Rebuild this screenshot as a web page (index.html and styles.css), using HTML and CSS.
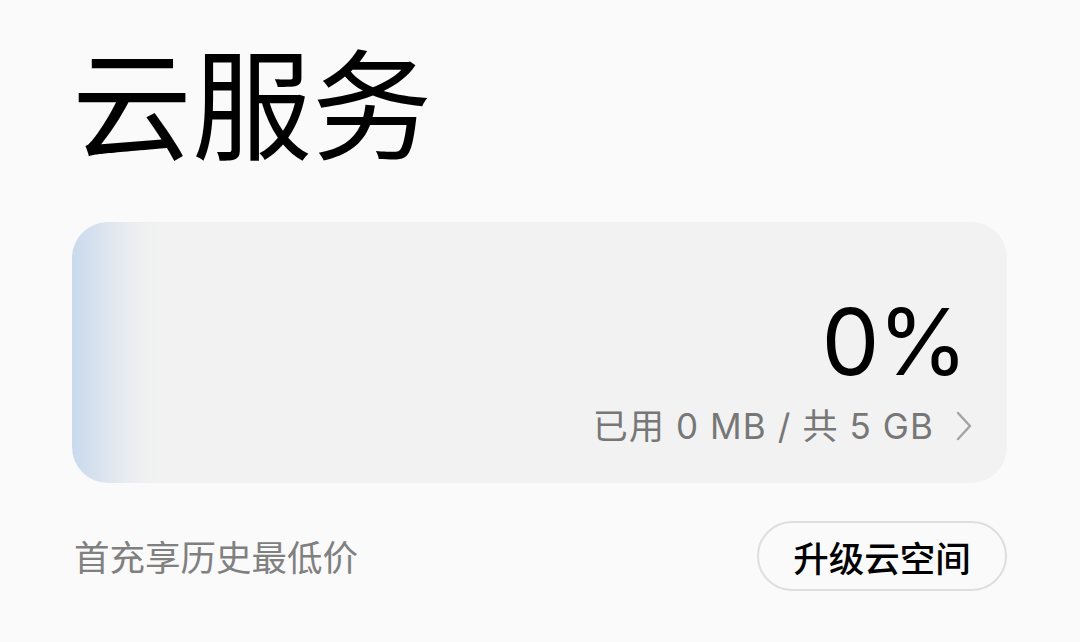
FILE: index.html
```html
<!DOCTYPE html>
<html lang="zh-CN">
<head>
<meta charset="utf-8">
<title>云服务</title>
<link rel="stylesheet" href="styles.css">
</head>
<body>
<main class="page">
  <h1 class="title">云服务</h1>
  <section class="card">
    <div class="percent">0%</div>
    <div class="usage">
      <span class="usage-text">已用 0 MB / 共 5 GB</span>
      <svg class="chevron" width="16" height="30" viewBox="0 0 16 30" aria-hidden="true">
        <polyline points="2,2 14,15 2,28" fill="none" stroke="#a3a3a3" stroke-width="2.4" stroke-linecap="round" stroke-linejoin="round"/>
      </svg>
    </div>
  </section>
  <div class="footer">
    <span class="promo">首充享历史最低价</span>
    <button class="upgrade">升级云空间</button>
  </div>
</main>
</body>
</html>
```
FILE: styles.css
```css
html, body {
  margin: 0;
  padding: 0;
  background: #fafafa;
}
body {
  width: 1080px;
  height: 642px;
  overflow: hidden;
  font-family: "Noto Sans CJK SC", "Noto Sans", sans-serif;
  color: #000;
}
.page {
  padding: 0 73px 0 72px;
  display: flex;
  flex-direction: column;
}
.title {
  margin: 0;
  padding-top: 24px;
  font-size: 120px;
  font-weight: 400;
  line-height: 150px;
  height: 150px;
  letter-spacing: 0;
}
.card {
  margin-top: 48px;
  height: 261px;
  border-radius: 36px;
  background: linear-gradient(90deg, #c8daee 0px, #d8e2ee 25px, #e6eaf0 50px, #eff0f1 72px, #f2f2f2 90px, #f2f2f2 100%);
  display: flex;
  flex-direction: column;
  align-items: flex-end;
  justify-content: flex-start;
  padding: 0 35px 0 0;
  box-sizing: border-box;
}
.percent {
  margin-top: 70px;
  margin-right: 6px;
  font-family: Inter, "Noto Sans", sans-serif;
  font-size: 92px;
  line-height: 100px;
  height: 100px;
  font-weight: 400;
  letter-spacing: -2px;
  color: #000;
}
.usage {
  display: flex;
  align-items: center;
  gap: 22px;
  margin-top: 12px;
}
.usage-text {
  font-family: Inter, "Noto Sans CJK SC", sans-serif;
  font-size: 35px;
  letter-spacing: 1.1px;
  line-height: 44px;
  color: #777;
}
.chevron {
  display: block;
}
.footer {
  display: flex;
  justify-content: space-between;
  align-items: center;
  margin-top: 38px;
}
.promo {
  font-size: 35.5px;
  color: #808080;
  line-height: 50px;
  padding-left: 2px;
}
.upgrade {
  height: 70px;
  width: 250px;
  border-radius: 35px;
  border: 2px solid #dedede;
  background: transparent;
  font-family: "Noto Sans CJK SC", sans-serif;
  font-size: 35.5px;
  font-weight: 500;
  color: #000;
  padding: 0;
  cursor: pointer;
}
```
